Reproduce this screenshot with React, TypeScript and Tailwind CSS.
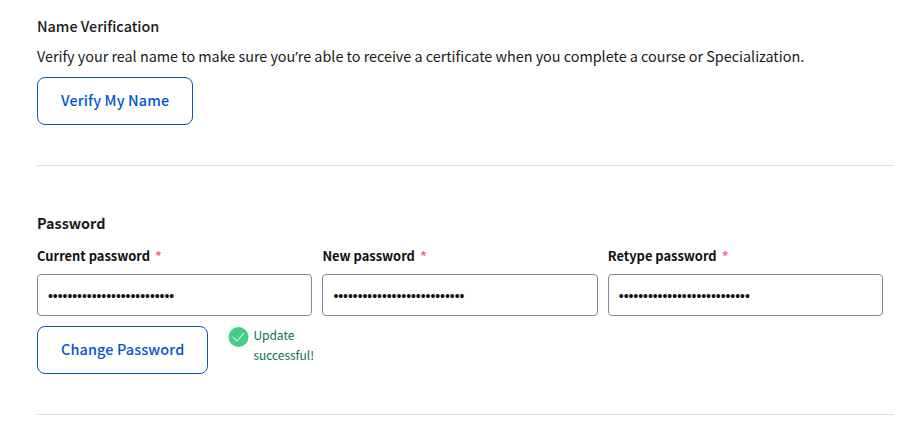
const fields = [
  { label: 'Current password', value: '•'.repeat(26) },
  { label: 'New password', value: '•'.repeat(27) },
  { label: 'Retype password', value: '•'.repeat(27) },
];

const button =
  'flex h-12 items-start rounded-lg border border-[#0a56b8] bg-white text-left pl-[23px] whitespace-nowrap text-[14.4px] leading-[43px] tracking-[0.15px] font-medium text-[#0056d2]';

function PasswordField({ label, value }: { label: string; value: string }) {
  return (
    <div className="w-[275.3px]">
      <div className="flex h-6 items-start gap-[5px] whitespace-nowrap text-[12.9px] leading-6 font-bold text-[#111]">
        <span>{label}</span>
        <span className="text-[14.4px] font-medium text-[#ee6573]">*</span>
      </div>
      <div className="mt-1.5 h-[42px] overflow-hidden rounded border border-[#8a8799] pl-2.5 font-['Liberation_Sans',sans-serif] text-[14px] leading-[42px] tracking-[-0.05px] text-[#111]">
        {value}
      </div>
    </div>
  );
}

export default function App() {
  return (
    <main className="h-[446px] w-[904px] overflow-hidden bg-white pt-[14px] pl-[37px] font-['Noto_Sans_CJK_SC','Noto_Sans',sans-serif] text-[#1a1a1a]">
      <section className="h-[152px] w-[857px] border-b border-[#dddfe3]">
        <h2 className="h-6 text-[14.4px] leading-6 font-medium">Name Verification</h2>
        <p className="mt-1.5 h-6 whitespace-nowrap text-[14.4px] leading-6 tracking-[-0.02px]">
          Verify your real name to make sure you<span className="font-['Noto_Sans',sans-serif]">’</span>re able to receive a certificate when you complete a course or Specialization.
        </p>
        <button className={button + ' mt-[9px] w-[156px]'}>Verify My Name</button>
      </section>
      <section className="h-[249px] w-[857px] border-b border-[#dddfe3] pt-[45px]">
        <h2 className="h-6 text-[14.4px] leading-6 font-bold">Password</h2>
        <div className="mt-[9px] flex gap-[10.1px]">
          {fields.map((f) => (
            <PasswordField key={f.label} label={f.label} value={f.value} />
          ))}
        </div>
        <div className="mt-2.5 flex items-start">
          <button className={button + ' w-[171px]'}>Change Password</button>
          <svg className="mt-px ml-5 h-5 w-[21px]" viewBox="0 0 20 20" fill="none">
            <circle cx="10" cy="10" r="10" fill="#46cc84" />
            <path d="M4.2 10.2 8.4 14.1 15.5 6" stroke="white" strokeWidth="1" />
          </svg>
          <p className="-mt-px ml-[4.4px] w-[70px] text-[12px] leading-5 tracking-[-0.03px] text-[#087051]">
            Update
            <br />
            successful!
          </p>
        </div>
      </section>
    </main>
  );
}
